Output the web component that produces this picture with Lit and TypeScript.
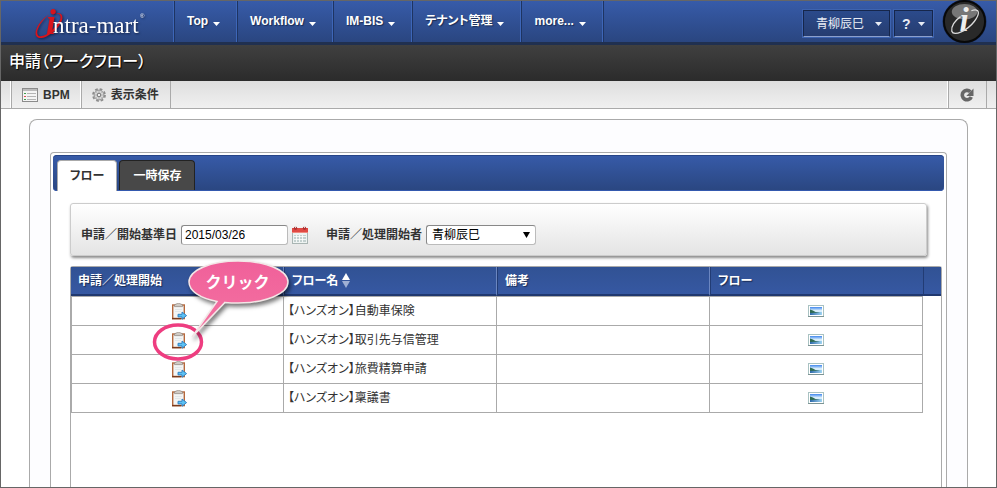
import { LitElement, html, css } from "lit";
import { customElement, property, state } from "lit/decorators.js";
import { classMap } from "lit/directives/class-map.js";

const MENU = ["Top", "Workflow", "IM-BIS", "テナント管理", "more..."];
const TABS = ["フロー", "一時保存"];
const FLOWS = [
  "【ハンズオン】自動車保険",
  "【ハンズオン】取引先与信管理",
  "【ハンズオン】旅費精算申請",
  "【ハンズオン】稟議書",
];

const base = css`
  * {
    box-sizing: border-box;
  }
  button {
    font: inherit;
    color: inherit;
    margin: 0;
    padding: 0;
    border: 0;
    background: none;
    cursor: pointer;
  }
  svg {
    display: block;
  }
`;

const caret = html`<svg width="7" height="4" viewBox="0 0 7 4"><path d="M0 0h7L3.500 4z" fill="currentColor" /></svg>`;

const listIcon = html`<svg width="16" height="14" viewBox="0 0 16 14">
  <rect x=".5" y=".5" width="15" height="13" fill="#f4f4f4" stroke="#8b8b8b" />
  <path d="M1 2h14" stroke="#bbb" stroke-width="2" />
  <path d="M5 5.500h9M5 8.500h9M5 11.500h9" stroke="#b4b4b4" />
  <path d="M2 5.500h2" stroke="#3fa04a" /><path d="M2 8.500h2" stroke="#e05050" /><path d="M2 11.500h2" stroke="#3fa04a" />
</svg>`;

const gearIcon = html`<svg width="14" height="14" viewBox="0 0 14 14">
  <circle cx="7" cy="7" r="6" fill="none" stroke="#8c8c8c" stroke-width="1.800" stroke-dasharray="2.700 2.012" />
  <circle cx="7" cy="7" r="4.900" fill="#d6d6d6" stroke="#929292" />
  <path d="M7 3v8M3 7h8M4.200 4.200l5.600 5.600M9.800 4.200L4.200 9.800" stroke="#adadad" stroke-width=".7" />
  <circle cx="7" cy="7" r="1.800" fill="#eee" stroke="#777" />
</svg>`;

const refreshIcon = html`<svg width="14" height="14" viewBox="0 0 14 14">
  <path d="M10.300 3.700A4.700 4.700 0 1 0 11.300 9" fill="none" stroke="#666" stroke-width="3.600" />
  <path d="M13.500.6v7.400H6.300z" fill="#666" />
</svg>`;

const calendarIcon = html`<svg width="16" height="18" viewBox="0 0 16 18">
  <rect x=".5" y="2.500" width="15" height="15" fill="#eef3f2" stroke="#a9b5b3" />
  <path d="M0 2h16v5H0z" fill="#e04a44" /><path d="M0 6h16v1H0z" fill="#f08a80" />
  <path d="M2 9h12v7H2z" fill="#c3d0cf" />
  <path d="M2 10.500h12M2 13.500h12M4.500 9v7M7.500 9v7M10.500 9v7" stroke="#fff" stroke-width=".8" />
  <circle cx="3.500" cy="2.200" r="1.700" fill="#b03030" /><circle cx="12.500" cy="2.200" r="1.700" fill="#b03030" />
  <path d="M3.500 0v2M12.500 0v2" stroke="#ddd" />
</svg>`;

const clipboardIcon = html`<svg width="18" height="17" viewBox="-3 0 18 17">
  <rect x=".7" y="2" width="11.600" height="13.600" fill="#f3f5f5" stroke="#b5683c" stroke-width="1.400" />
  <path d="M0 15.600h9" stroke="#7a3a1c" stroke-width="1.400" />
  <path d="M3 6.500h7M3 8.500h6" stroke="#e2e8ea" />
  <path d="M2.500 3.600V1.800L4.300 1C5-.1 8-.1 8.700 1l1.800.8v1.800z" fill="#cfcac4" stroke="#8c837b" stroke-width=".7" />
  <path d="M6 11.300h4V9L14.600 12.600 10 16.300v-2.400H6z" fill="#5cc2f4" stroke="#2b7cc0" stroke-width=".9" />
</svg>`;

const pictureIcon = html`<svg width="16" height="12" viewBox="0 0 16 12">
  <defs>
    <linearGradient id="sky" x2="0" y2="1"><stop stop-color="#3f86ee" /><stop offset=".7" stop-color="#d7edfb" /></linearGradient>
    <linearGradient id="sea"><stop stop-color="#2c67a8" /><stop offset="1" stop-color="#9fd4f2" /></linearGradient>
  </defs>
  <rect x=".5" y=".5" width="15" height="11" fill="#fff" stroke="#a9c2c2" />
  <path d="M0 11.500h16" stroke="#7c9494" />
  <path d="M2 2h12v5H2z" fill="url(#sky)" /><path d="M2 7h12v3H2z" fill="url(#sea)" />
  <path d="M2 4.500Q5 5 7.500 7L12 7.500 2 8z" fill="#2f6b52" />
</svg>`;

const sortIcon = html`<svg width="8" height="15" viewBox="0 0 8 15">
  <path d="M4 0l4 7H0z" fill="#fff" /><path d="M4 15L0 8h8z" fill="#9fb0d4" />
</svg>`;

@customElement("brand-logo")
export class BrandLogo extends LitElement {
  static styles = [
    base,
    css`
      :host {
        display: block;
        filter: drop-shadow(1px 1px 1px #14244a);
      }
      .word {
        font: 23px "Liberation Serif", serif;
        fill: #fff;
      }
      .initial {
        font: italic bold 36px "Liberation Serif", serif;
        fill: #d8141c;
      }
      .mark {
        font: 6px "Liberation Sans", sans-serif;
        fill: #fff;
      }
    `,
  ];
  render() {
    return html`<svg width="114" height="41" viewBox="0 -7 114 41" role="img" aria-label="intra-mart">
      <path
        d="M18 7C24 3 30 5 28 12 25 21 13 31 5 30-3 28 4 13 15 6.500 6 14 0 25 5 28 11 30 22 20 26 12 28 6 24 4 18 7Z"
        fill="#d8141c"
      />
      <text class="initial" x="12" y="26">i</text>
      <text class="word" x="19" y="25">ntra-mart</text>
      <text class="mark" x="106" y="10">®</text>
    </svg>`;
  }
}

@customElement("click-callout")
export class ClickCallout extends LitElement {
  @property() label = "";
  static styles = [
    base,
    css`
      :host {
        display: block;
        position: relative;
        width: 144px;
        height: 108px;
        pointer-events: none;
      }
      .label {
        position: absolute;
        top: 12px;
        left: 37px;
        width: 100px;
        color: #fff;
        font: bold 16px/24px "Noto Sans CJK JP", sans-serif;
        text-align: center;
      }
      .balloon {
        filter: drop-shadow(2px 3px 2px #0008);
      }
    `,
  ];
  render() {
    return html`<svg width="144" height="108" viewBox="0 0 144 108">
        <defs><linearGradient id="pink" x2="0" y2="1"><stop stop-color="#f0609a" /><stop offset="1" stop-color="#f474a2" /></linearGradient></defs>
        <ellipse cx="27" cy="85" rx="23.500" ry="17" fill="none" stroke="#ee3d80" stroke-width="3.500" />
        <path
          class="balloon"
          d="M66 44.500C49 41 38 34 38 25 38 13 60 4 87 4s50 9 50 21-23 21-50 21q-7 0-13-.6L41 80Z"
          fill="url(#pink)"
          stroke="#f3e6e6"
          stroke-width="1.500"
        />
      </svg>
      <span class="label">${this.label}</span>`;
  }
}

@customElement("global-header")
export class GlobalHeader extends LitElement {
  static styles = [
    base,
    css`
      :host {
        display: flex;
        height: 44px;
        border-bottom: 3px solid #203050;
        background: linear-gradient(#375ba9, #2a4680);
        color: #fff;
        font-weight: bold;
      }
      .brand {
        display: flex;
        align-items: center;
        width: 173px;
        padding-left: 33px;
        border-right: 1px solid #3d66b8;
      }
      .menu {
        display: flex;
        flex: 1;
      }
      .item {
        display: flex;
        align-items: center;
        gap: 5px;
        padding: 0 16px 2px 12px;
        border-left: 1px solid #1e3462;
        border-right: 1px solid #3d66b8;
        text-shadow: 1px 1px 1px #1a2c55;
      }
      .item:last-child {
        box-shadow: 1px 0 #1e3462;
      }
      .item svg {
        margin-top: 6px;
      }
      .tools {
        display: flex;
        align-items: center;
        gap: 4px;
        padding-right: 9px;
      }
      .tool {
        display: flex;
        align-items: center;
        justify-content: space-between;
        height: 27px;
        margin-top: 4px;
        padding: 0 7px;
        border: 1px solid #16264a;
        border-bottom-color: #8ca0cc;
        background: linear-gradient(#2b4a8b, #263d70);
        box-shadow: 0 0 0 1px #3d63b0;
        color: #e8ecf4;
        font-size: 12px;
      }
      .user {
        width: 87px;
        padding-left: 12px;
        font-weight: normal;
      }
      .help {
        width: 39px;
        font-size: 14px;
      }
      .badge {
        margin-left: 5px;
      }
      .badge text {
        font: italic bold 34px "Liberation Serif", serif;
        fill: #eee;
      }
    `,
  ];
  render() {
    return html`
      <div class="brand"><brand-logo></brand-logo></div>
      <nav class="menu">${MENU.map((m) => html`<button class="item">${m}${caret}</button>`)}</nav>
      <div class="tools">
        <button class="tool user">青柳辰巳${caret}</button>
        <button class="tool help">?${caret}</button>
        <svg class="badge" width="45" height="45" viewBox="0 0 46 46">
          <circle cx="23" cy="23" r="22.500" fill="#182c58" />
          <circle cx="23" cy="23" r="21" fill="#292929" stroke="#080808" stroke-width="2" />
          <ellipse cx="23" cy="13" rx="13" ry="8" fill="#777" />
          <text x="18" y="33">i</text>
          <path d="M30 12C39 9 39 15 33 23 26 32 12 39 10 33 9 28 13 22 19 18" fill="none" stroke="#ddd" stroke-width="1.300" />
        </svg>
      </div>
    `;
  }
}

@customElement("flow-table")
export class FlowTable extends LitElement {
  static styles = [
    base,
    css`
      :host {
        display: block;
        border: 1px solid #aaa;
        border-bottom: 0;
        border-radius: 3px 3px 0 0;
      }
      .grid {
        width: 100%;
        table-layout: fixed;
        border-collapse: separate;
        border-spacing: 0;
      }
      th {
        height: 29px;
        padding: 0 7px;
        border-bottom: 2px solid #20386f;
        background: linear-gradient(#315294, #3658a2);
        color: #fff;
        text-align: left;
        text-shadow: 1px 1px 1px #1a2c55;
      }
      th + th {
        border-left: 1px solid #223c74;
      }
      .divided {
        border-right: 1px solid #6b86c0;
      }
      .spacer {
        width: 18px;
        padding: 0;
      }
      .sort {
        display: flex;
        align-items: center;
        gap: 4px;
        font-weight: bold;
      }
      td {
        position: relative;
        height: 29px;
        padding: 0 4px;
        border-right: 1px solid #aaa;
        border-bottom: 1px solid #aaa;
      }
      td:first-child {
        border-left: 1px solid #aaa;
      }
      tr:first-child > td {
        height: 30px;
        border-top: 1px solid #aaa;
      }
      .icon {
        display: block;
        margin: 0 auto;
      }
      .hint {
        position: absolute;
        z-index: 1;
        top: -69px;
        left: 50%;
        margin-left: -27px;
      }
    `,
  ];
  render() {
    return html`<table class="grid">
      <thead>
        <tr>
          <th class="divided">申請／処理開始</th>
          <th class="divided"><button class="sort">フロー名${sortIcon}</button></th>
          <th class="divided">備考</th>
          <th>フロー</th>
          <th class="spacer"></th>
        </tr>
      </thead>
      <tbody>
        ${FLOWS.map(
          (name, i) => html`<tr>
            <td>
              <button class="icon" aria-label="申請">${clipboardIcon}</button>
              ${i === 1 ? html`<click-callout class="hint" label="クリック"></click-callout>` : ""}
            </td>
            <td>${name}</td>
            <td></td>
            <td><button class="icon" aria-label="フロー">${pictureIcon}</button></td>
          </tr>`
        )}
      </tbody>
    </table>`;
  }
}

@customElement("app-root")
export class AppRoot extends LitElement {
  @state() private tab = 0;
  static styles = [
    base,
    css`
      :host {
        display: flex;
        flex-direction: column;
        box-sizing: border-box;
        min-height: 100vh;
        border: 1px solid #666;
        background: #fff;
        color: #333;
        font: 12px/16px "Liberation Sans", "Noto Sans CJK JP", sans-serif;
        font-feature-settings: "palt";
      }
      .title {
        margin: 0;
        padding: 5px 8px 7px;
        background: linear-gradient(#404040, #2b2b2b);
        color: #fff;
        font-size: 16px;
        font-weight: 500;
        line-height: 24px;
        text-shadow: 1px 1px 1px #000;
      }
      .toolbar {
        display: flex;
        height: 28px;
        padding: 0 9px 0 10px;
        border-bottom: 1px solid #aaa;
        background: linear-gradient(#dedede, #f0f0f0);
      }
      .action {
        display: flex;
        align-items: center;
        gap: 5px;
        padding: 0 11px 0 10px;
        border-left: 1px solid #aaa;
        box-shadow: -1px 0 #fff;
        font-weight: bold;
      }
      .action.end {
        border-right: 1px solid #aaa;
      }
      .action.push {
        margin-left: auto;
        padding: 0 12px 0 11px;
      }
      .page {
        display: flex;
        flex: 1;
        margin: 10px 28px 0;
        padding: 32px 20px 0;
        border: 1px solid #aaa;
        border-bottom: 0;
        border-radius: 8px 8px 0 0;
        background: #fdfdff;
      }
      .box {
        display: flex;
        flex: 1;
        flex-direction: column;
        padding: 2px 2px 0;
        border: 1px solid #aaa;
        border-bottom: 0;
        border-radius: 4px 4px 0 0;
        background: #fff;
      }
      .tabs {
        display: flex;
        gap: 2px;
        height: 36px;
        padding: 5px 4px 0;
        border-radius: 4px;
        background: linear-gradient(#375ba9, #2a4680);
        box-shadow: inset 0 1px #264488, inset 0 -1px #3459ae;
      }
      .tab {
        height: 30px;
        padding: 0 13px;
        border: 1px solid #222;
        border-bottom: 0;
        border-radius: 4px 4px 0 0;
        background: #484848;
        color: #fff;
        font-weight: bold;
      }
      .tab.on {
        height: 31px;
        padding: 0 12px;
        border-color: #aaa;
        background: #fff;
        color: #333;
      }
      .filter {
        display: flex;
        align-items: center;
        margin: 12px 17px 10px;
        padding: 21px 10px 10px;
        border: 1px solid #ccc;
        border-radius: 3px;
        background: linear-gradient(#fff, #e4e4e4);
        box-shadow: 1px 2px 3px #0007;
        font-weight: bold;
      }
      .field {
        height: 20px;
        margin: 0;
        border: 1px solid #bbb;
        border-top-color: #888;
        border-left-color: #888;
        border-radius: 3px;
        background: #fff;
        color: #000;
        font: 12px "Liberation Sans", "Noto Sans CJK JP", sans-serif;
      }
      .date {
        width: 107px;
        margin: 0 4px;
        padding: 0 3px;
      }
      .calendar {
        margin-right: 18px;
      }
      .choice {
        position: relative;
        margin-left: 4px;
      }
      .choice select {
        display: block;
        width: 110px;
        padding: 0 5px;
        appearance: none;
      }
      .choice svg {
        position: absolute;
        top: 7px;
        right: 6px;
        color: #000;
        pointer-events: none;
      }
      .flows {
        flex: 1;
        margin: 0 2px 0 17px;
      }
    `,
  ];
  render() {
    return html`
      <global-header></global-header>
      <h1 class="title">申請（ワークフロー）</h1>
      <div class="toolbar">
        <button class="action">${listIcon}BPM</button>
        <button class="action end">${gearIcon}表示条件</button>
        <button class="action end push" aria-label="更新">${refreshIcon}</button>
      </div>
      <main class="page">
        <section class="box">
          <div class="tabs" role="tablist">
            ${TABS.map(
              (t, i) => html`<button
                role="tab"
                aria-selected=${this.tab === i}
                class=${classMap({ tab: true, on: this.tab === i })}
                @click=${() => (this.tab = i)}
              >
                ${t}
              </button>`
            )}
          </div>
          <form class="filter">
            <label for="date">申請／開始基準日</label>
            <input class="field date" id="date" type="text" value="2015/03/26" />
            <button class="calendar" type="button" aria-label="カレンダー">${calendarIcon}</button>
            <label for="starter">申請／処理開始者</label>
            <span class="choice">
              <select class="field" id="starter"><option>青柳辰巳</option></select>
              <svg width="7" height="6" viewBox="0 0 7 6"><path d="M0 0h7L3.500 6z" fill="currentColor" /></svg>
            </span>
          </form>
          <flow-table class="flows"></flow-table>
        </section>
      </main>
    `;
  }
}
